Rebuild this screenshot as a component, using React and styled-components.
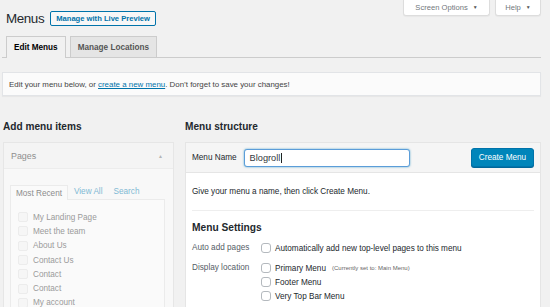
import React from 'react';
import styled, { createGlobalStyle } from 'styled-components';

const GlobalStyle = createGlobalStyle`
  html, body {
    margin: 0;
    padding: 0;
    background: #f1f1f1;
    font-family: "Liberation Sans", Arial, sans-serif;
    color: #23282d;
    overflow: hidden;
  }
`;

const Page = styled.div`
  width: 550px;
  height: 307px;
  padding: 0 9px 0 2px;
  box-sizing: border-box;
  overflow: hidden;
`;

const TopBar = styled.div`
  display: flex;
  justify-content: space-between;
  align-items: flex-start;
  height: 35px;
`;

const TitleRow = styled.div`
  display: flex;
  align-items: center;
  margin: 11px 0 0 4px;
`;

const Title = styled.h1`
  margin: 0;
  font-size: 13.4px;
  letter-spacing: -0.4px;
  font-weight: 400;
  line-height: 15px;
  color: #23282d;
`;

const OutlineButton = styled.a`
  margin-left: 6px;
  height: 15px;
  box-sizing: border-box;
  padding: 0 5px;
  display: flex;
  align-items: center;
  border: 1px solid #0073aa;
  border-radius: 2px;
  background: #f7f7f7;
  color: #0073aa;
  font-size: 7.6px;
  font-weight: 700;
`;

const MetaLinks = styled.div`
  display: flex;
  gap: 5px;
`;

const MetaButton = styled.div`
  height: 17px;
  margin-top: -1px;
  box-sizing: border-box;
  width: ${({ w }) => w}px;
  display: flex;
  align-items: center;
  justify-content: center;
  gap: 5px;
  background: #fff;
  border: 1px solid #ddd;
  border-top: none;
  border-radius: 0 0 3px 3px;
  box-shadow: 0 1px 1px rgba(0,0,0,0.04);
  color: #72777c;
  font-size: 7.6px;
  span { font-size: 5px; color: #555; }
`;

const NavTabs = styled.div`
  display: flex;
  align-items: flex-end;
  gap: 4px;
  padding-left: 4px;
  border-bottom: 1px solid #ccc;
  height: 22px;
`;

const Tab = styled.div`
  height: ${({ active }) => (active ? 22 : 21)}px;
  box-sizing: border-box;
  padding: 0 7px;
  display: flex;
  align-items: center;
  border: 1px solid #ccc;
  border-bottom: none;
  margin-bottom: ${({ active }) => (active ? '-1px' : '0')};
  background: ${({ active }) => (active ? '#f1f1f1' : '#e5e5e5')};
  color: ${({ active }) => (active ? '#000' : '#555')};
  font-size: 8.2px;
  font-weight: 700;
`;

const Notice = styled.div`
  margin-top: 14px;
  height: 24px;
  box-sizing: border-box;
  display: flex;
  align-items: center;
  padding-left: 6px;
  background: #fbfbfb;
  border: 1px solid #e2e4e7;
  box-shadow: 0 1px 1px rgba(0,0,0,0.04);
  font-size: 7.9px;
  color: #444;
  white-space: pre;
  a { color: #0073aa; text-decoration: underline; }
`;

const Columns = styled.div`
  display: grid;
  grid-template-columns: 171px 356px;
  column-gap: 11px;
  margin: 24px 0 0 1px;
`;

const Heading = styled.h2`
  margin: 0 0 8px;
  font-size: 10.1px;
  line-height: 14px;
  font-weight: 700;
  color: #23282d;
`;

const Column = styled.div`
  display: flex;
  flex-direction: column;
`;

const SidePanel = styled.div`
  border: 1px solid #e6e6e6;
  background: #f8f8f8;
  height: 200px;
`;

const SideHeader = styled.div`
  height: 26px;
  box-sizing: border-box;
  display: flex;
  align-items: center;
  justify-content: space-between;
  padding: 0 10px 0 7px;
  background: #f4f4f4;
  border-bottom: 1px solid #ececec;
  color: #8f8f8f;
  font-size: 8.9px;
  span { font-size: 5px; color: #b5b5b5; }
`;

const SideBody = styled.div`
  padding: 15px 8px 0 6px;
`;

const SubTabs = styled.div`
  display: flex;
  align-items: flex-end;
  font-size: 8.2px;
`;

const SubTab = styled.div`
  height: 15px;
  box-sizing: border-box;
  display: flex;
  align-items: center;
  padding: 0 ${({ active }) => (active ? 5 : 0)}px;
  margin-right: ${({ active }) => (active ? 6 : 11)}px;
  border: ${({ active }) => (active ? '1px solid #ebebeb' : 'none')};
  border-bottom: none;
  margin-bottom: ${({ active }) => (active ? '-1px' : '0')};
  background: ${({ active }) => (active ? '#fafafa' : 'transparent')};
  color: ${({ active }) => (active ? '#8c8c8c' : '#7fb8d4')};
  position: relative;
  z-index: 1;
`;

const ListBox = styled.div`
  border: 1px solid #ebebeb;
  background: #fafafa;
  padding: 10px 0 0 7px;
  height: 120px;
`;

const ListItem = styled.div`
  display: flex;
  align-items: center;
  gap: 5px;
  height: 14.3px;
  color: #9a9a9a;
  font-size: 8.2px;
`;

const FadedBox = styled.span`
  width: 10px;
  height: 10px;
  box-sizing: border-box;
  border: 1px solid #ececec;
  border-radius: 2px;
  background: #f6f6f6;
`;

const MainPanel = styled.div`
  border: 1px solid #e5e5e5;
  background: #fff;
  height: 200px;
`;

const MainHeader = styled.div`
  height: 30px;
  box-sizing: border-box;
  display: flex;
  align-items: center;
  padding: 0 6px;
  background: #f5f5f5;
  border-bottom: 1px solid #e5e5e5;
  font-size: 8.2px;
  color: #23282d;
`;

const NameInput = styled.div`
  margin-left: 7px;
  width: 166px;
  height: 18px;
  box-sizing: border-box;
  border: 1px solid #5b9dd9;
  border-radius: 3px;
  box-shadow: 0 0 2px rgba(30,140,190,0.8);
  background: #fff;
  display: flex;
  align-items: center;
  padding-left: 5px;
  font-size: 9.2px;
  color: #32373c;
`;

const Caret = styled.span`
  display: inline-block;
  width: 1px;
  height: 10px;
  background: #222;
  margin-left: 1px;
`;

const PrimaryButton = styled.div`
  margin-left: auto;
  height: 19px;
  width: 63px;
  box-sizing: border-box;
  display: flex;
  align-items: center;
  justify-content: center;
  background: #0085ba;
  border: 1px solid #0073aa;
  border-radius: 3px;
  box-shadow: 0 1px 0 #006799;
  color: #fff;
  font-size: 8.2px;
`;

const MainBody = styled.div`
  padding: 0 6px;
  font-size: 8.2px;
  color: #23282d;
`;

const Hint = styled.p`
  margin: 0;
  height: 37px;
  display: flex;
  align-items: center;
  border-bottom: 1px solid #eee;
`;

const SubHeading = styled.h3`
  margin: 10px 0 7px;
  font-size: 10.2px;
  line-height: 13px;
  font-weight: 700;
`;

const SettingRow = styled.div`
  display: grid;
  grid-template-columns: 69px 1fr;
  margin-bottom: 6px;
`;

const SettingLabel = styled.div`
  color: #555d66;
  line-height: 14px;
`;

const Options = styled.div`
  display: flex;
  flex-direction: column;
`;

const Option = styled.label`
  display: flex;
  align-items: center;
  gap: 4px;
  height: 14px;
  small { font-size: 6px; color: #666; margin-left: 2px; }
`;

const Box = styled.span`
  width: 10px;
  height: 10px;
  box-sizing: border-box;
  border: 1px solid #b4b9be;
  border-radius: 3px;
  background: #fff;
`;

const pages = ['My Landing Page', 'Meet the team', 'About Us', 'Contact Us', 'Contact', 'Contact', 'My account'];

export default function App() {
  return (
    <Page>
      <GlobalStyle />
      <TopBar>
        <TitleRow>
          <Title>Menus</Title>
          <OutlineButton>Manage with Live Preview</OutlineButton>
        </TitleRow>
        <MetaLinks>
          <MetaButton w={87}>Screen Options <span>▼</span></MetaButton>
          <MetaButton w={46}>Help <span>▼</span></MetaButton>
        </MetaLinks>
      </TopBar>
      <NavTabs>
        <Tab active>Edit Menus</Tab>
        <Tab>Manage Locations</Tab>
      </NavTabs>
      <Notice>
        {'Edit your menu below, or '}<a>create a new menu</a>{'. Don’t forget to save your changes!'}
      </Notice>
      <Columns>
        <Column>
          <Heading>Add menu items</Heading>
          <SidePanel>
            <SideHeader>Pages <span>▲</span></SideHeader>
            <SideBody>
              <SubTabs>
                <SubTab active>Most Recent</SubTab>
                <SubTab>View All</SubTab>
                <SubTab>Search</SubTab>
              </SubTabs>
              <ListBox>
                {pages.map((p, i) => (
                  <ListItem key={i}><FadedBox />{p}</ListItem>
                ))}
              </ListBox>
            </SideBody>
          </SidePanel>
        </Column>
        <Column>
          <Heading>Menu structure</Heading>
          <MainPanel>
            <MainHeader>
              Menu Name
              <NameInput>Blogroll<Caret /></NameInput>
              <PrimaryButton>Create Menu</PrimaryButton>
            </MainHeader>
            <MainBody>
              <Hint>Give your menu a name, then click Create Menu.</Hint>
              <SubHeading>Menu Settings</SubHeading>
              <SettingRow>
                <SettingLabel>Auto add pages</SettingLabel>
                <Options>
                  <Option><Box />Automatically add new top-level pages to this menu</Option>
                </Options>
              </SettingRow>
              <SettingRow>
                <SettingLabel>Display location</SettingLabel>
                <Options>
                  <Option><Box />Primary Menu <small>(Currently set to: Main Menu)</small></Option>
                  <Option><Box />Footer Menu</Option>
                  <Option><Box />Very Top Bar Menu</Option>
                </Options>
              </SettingRow>
            </MainBody>
          </MainPanel>
        </Column>
      </Columns>
    </Page>
  );
}
